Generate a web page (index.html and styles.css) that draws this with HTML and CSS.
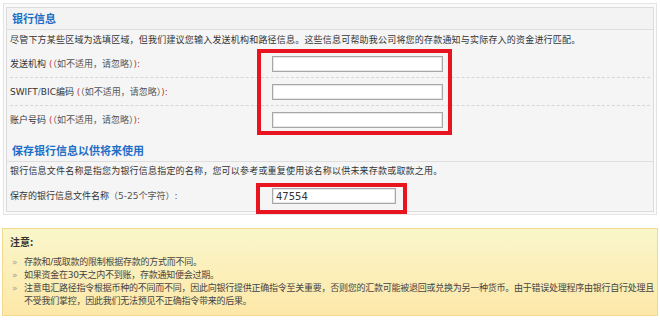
FILE: index.html
```html
<!DOCTYPE html>
<html lang="zh-CN">
<head>
<meta charset="utf-8">
<title>银行信息</title>
<link rel="stylesheet" href="styles.css">
</head>
<body>
<div class="frame">
  <div class="panel">
    <div class="hd">银行信息</div>
    <div class="desc">尽管下方某些区域为选填区域，但我们建议您输入发送机构和路径信息。这些信息可帮助我公司将您的存款通知与实际存入的资金进行匹配。</div>
    <div class="row">
      <label class="lbl">发送机构 <span class="red">(</span><span class="opt">（如不适用，请忽略）</span><span class="red">):</span></label>
      <input class="field" type="text" value="">
    </div>
    <div class="row">
      <label class="lbl">SWIFT<span class="slash">/</span>BIC编码 <span class="red">(</span><span class="opt">（如不适用，请忽略）</span><span class="red">):</span></label>
      <input class="field" type="text" value="">
    </div>
    <div class="row last">
      <label class="lbl">账户号码 <span class="red">(</span><span class="opt">（如不适用，请忽略）</span><span class="red">):</span></label>
      <input class="field" type="text" value="">
    </div>
    <div class="hd hd2">保存银行信息以供将来使用</div>
    <div class="desc desc2">银行信息文件名称是指您为银行信息指定的名称，您可以参考或重复使用该名称以供未来存款或取款之用。</div>
    <div class="row row2">
      <label class="lbl">保存的银行信息文件名称<span class="opt">（5-25个字符）:</span></label>
      <input class="field short" type="text" value="47554">
    </div>
  </div>
</div>
<div class="note">
  <div class="note-title">注意:</div>
  <ul class="note-list">
    <li>存款和/或取款的限制根据存款的方式而不同。</li>
    <li>如果资金在30天之内不到账，存款通知便会过期。</li>
    <li>注意电汇路径指令根据币种的不同而不同，因此向银行提供正确指令至关重要，否则您的汇款可能被退回或兑换为另一种货币。由于错误处理程序由银行自行处理且不受我们掌控，因此我们无法预见不正确指令带来的后果。</li>
  </ul>
</div>
<div class="mark mark1"></div>
<div class="mark mark2"></div>
</body>
</html>
```

FILE: styles.css
```css
* { box-sizing: border-box; }
html, body { margin: 0; padding: 0; background: #fff; }
body {
  position: relative;
  width: 660px;
  height: 325px;
  overflow: hidden;
  font-family: "DejaVu Sans", "Noto Sans CJK SC", sans-serif;
  font-size: 9px;
  color: #333;
}
.frame {
  margin: 3px 3px 0 3px;
  border: 1px solid #e4e4e4;
  background: #fafafa;
  padding: 3px 2px 2px 2px;
}
.panel {
  border: 1px solid #dcdcdc;
  background: #f5f5f5;
}
.hd {
  height: 22px;
  line-height: 21px;
  border-bottom: 1px solid #dedede;
  padding-left: 5px;
  font-family: "Noto Sans CJK SC", sans-serif;
  font-size: 11px;
  font-weight: bold;
  color: #1d6fc7;
  background: #f3f3f3;
}
.hd2 {
  margin-top: 7px;
  background: #f5f5f5;
}
.desc {
  height: 20px;
  line-height: 20px;
  padding-left: 3px;
  white-space: nowrap;
  letter-spacing: 0.2px;
}
.desc2 { height: 18px; line-height: 18px; }
.row {
  display: flex;
  align-items: center;
  margin: 0 3px;
  padding: 6px 0 5px;
  height: 28px;
  border-bottom: 1px dashed #d6d6d6;
}
.row.last { border-bottom: none; height: 27px; }
.row2 { border-bottom: none; height: 31px; padding: 8px 0 7px; }
.lbl {
  width: 262px;
  flex: none;
  white-space: nowrap;
  line-height: 14px;
}
.red { color: #c0392b; }
.opt { color: #555; }
.slash { color: #5a7fa8; }
.field {
  width: 171px;
  height: 16px;
  margin: 0;
  padding: 0 3px;
  border: 1px solid #a8a8a8;
  box-shadow: inset 0 0 0 1px #e6e6e6;
  background: #fff;
  font-family: "DejaVu Sans", sans-serif;
  font-size: 10px;
  color: #333;
  outline: none;
}
.field.short { width: 124px; }
.note {
  margin: 13px 2px 0 2px;
  height: 88px;
  border: 1px solid #f4d88c;
  background: linear-gradient(#faf6cb, #fde8a8);
  padding: 6px 0 0 7px;
}
.note-title {
  font-family: "Noto Sans CJK SC", sans-serif;
  font-size: 10px;
  font-weight: bold;
  line-height: 14px;
  color: #333;
}
.note-list {
  list-style: none;
  margin: 7px 0 0 0;
  padding: 0;
}
.note-list li {
  display: grid;
  grid-template-columns: 14px 634px;
  line-height: 13px;
  color: #444;
  letter-spacing: -0.25px;
}
.note-list li::before {
  content: "»";
  color: #a0a0a0;
  padding-left: 2px;
}
.mark {
  position: absolute;
  border: 4px solid #e8141f;
}
.mark1 { left: 257px; top: 49px; width: 195px; height: 86px; }
.mark2 { left: 256px; top: 183px; width: 151px; height: 31px; }
```
